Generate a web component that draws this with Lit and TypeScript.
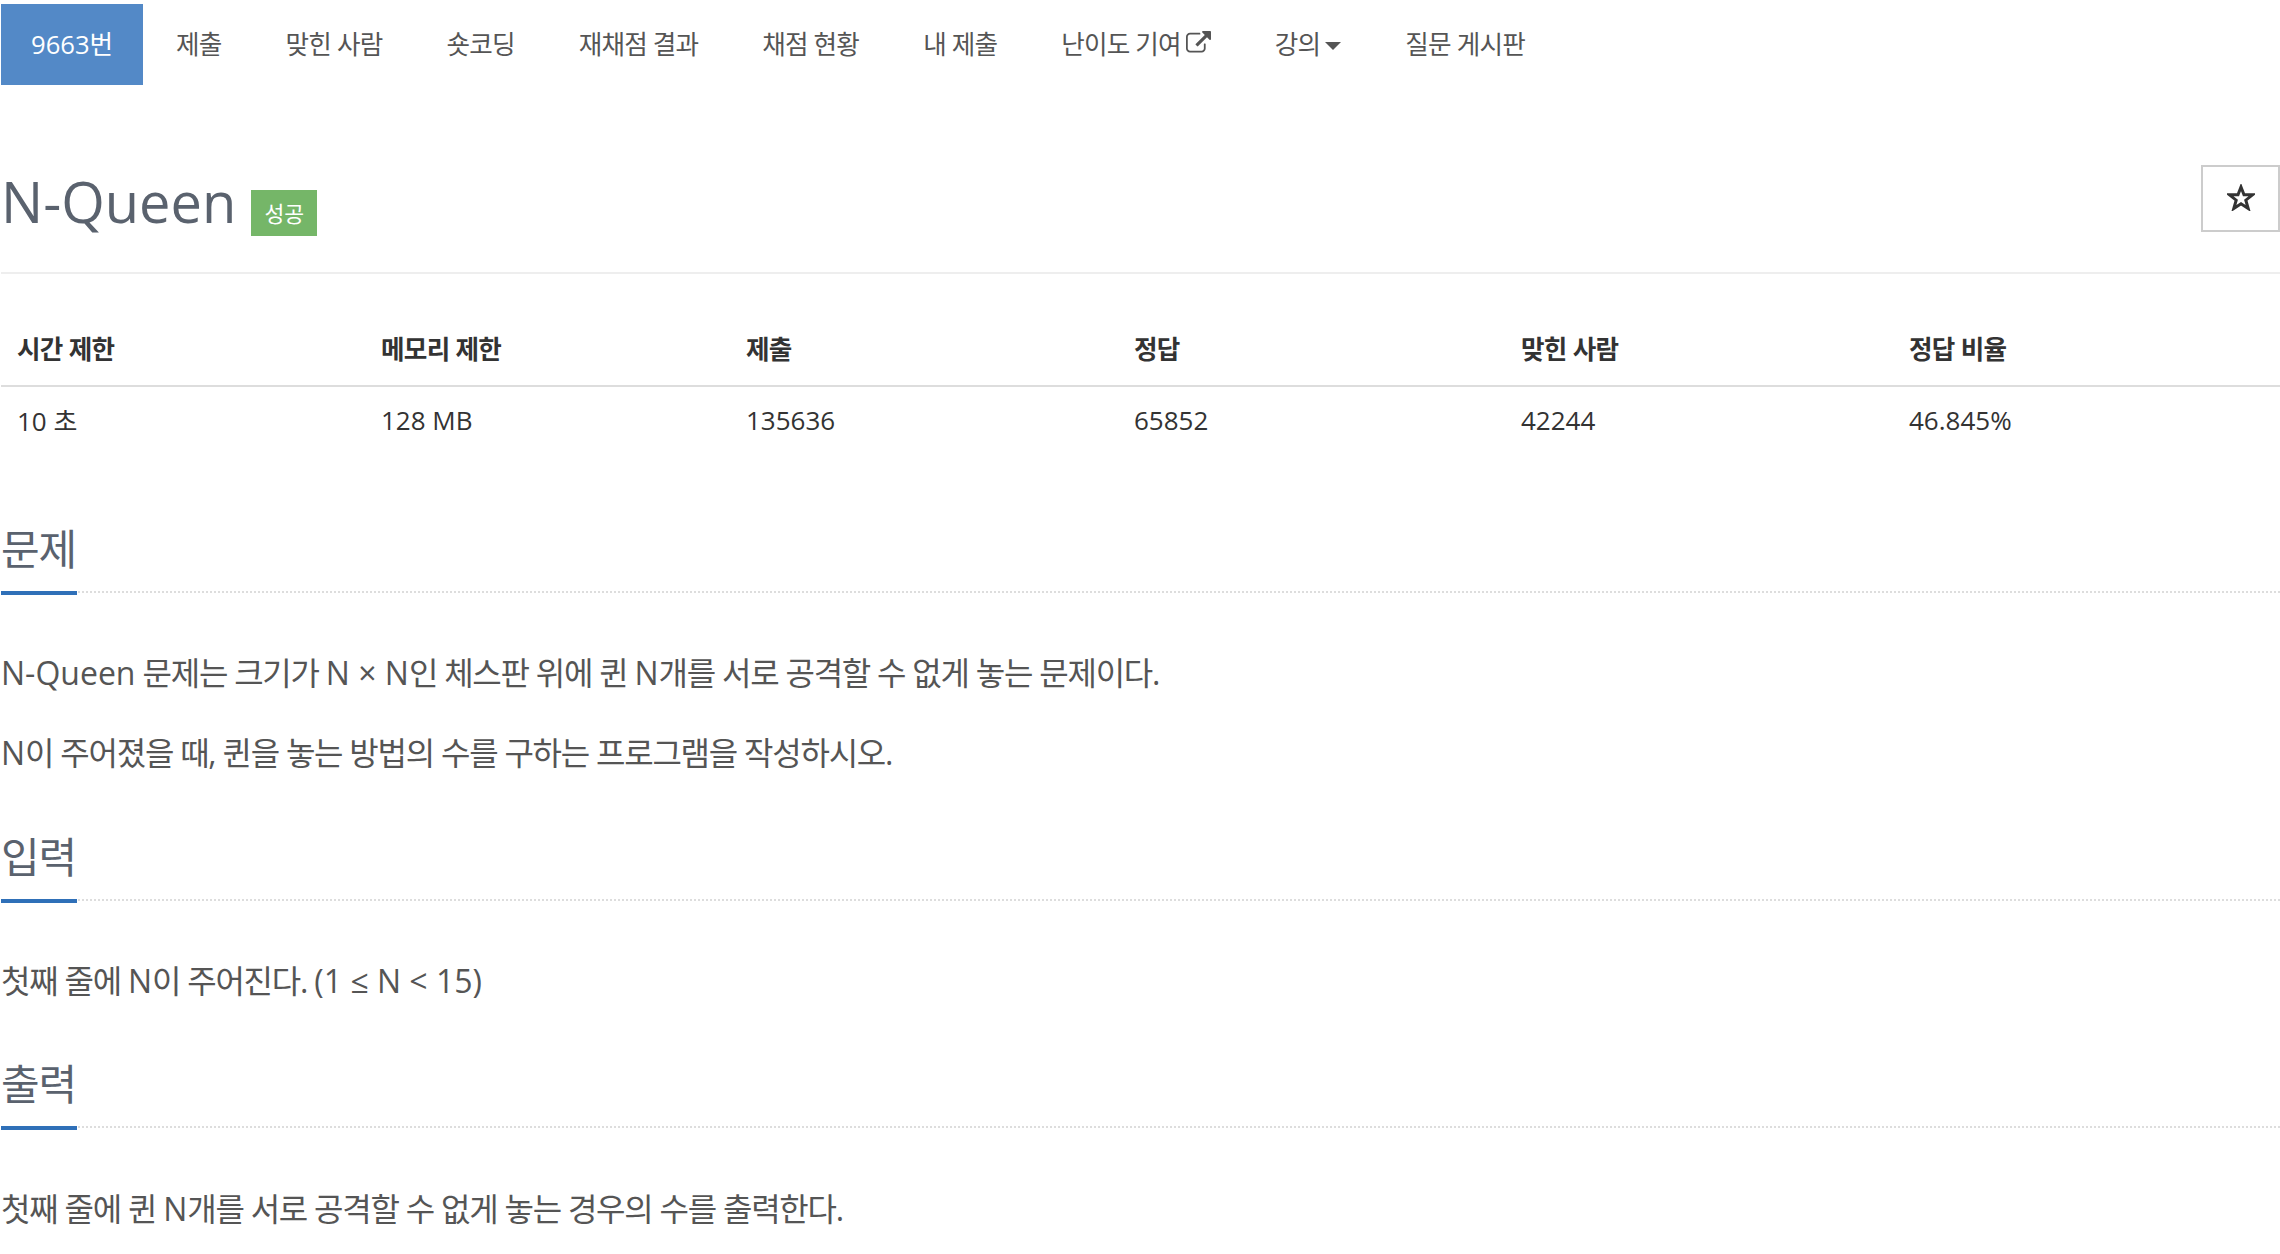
import { LitElement, css, html } from 'lit';
import { customElement } from 'lit/decorators.js';

const NAV = ['제출', '맞힌 사람', '숏코딩', '재채점 결과', '채점 현황', '내 제출'];
const COLS = [
  ['시간 제한', '10 초'],
  ['메모리 제한', '128 MB'],
  ['제출', '135636'],
  ['정답', '65852'],
  ['맞힌 사람', '42244'],
  ['정답 비율', '46.845%'],
];

@customElement('app-root')
export class AppRoot extends LitElement {
  render() {
    return html`
      <nav class="nav">
        <a class="active">9663번</a>
        ${NAV.map((n) => html`<a>${n}</a>`)}
        <a>난이도 기여
          <svg class="ext" viewBox="0 0 1792 1792"><path d="M1408 928v320q0 119-84.5 203.5t-203.5 84.5h-832q-119 0-203.5-84.5t-84.5-203.5v-832q0-119 84.5-203.5t203.5-84.5h704q14 0 23 9t9 23v64q0 14-9 23t-23 9h-704q-66 0-113 47t-47 113v832q0 66 47 113t113 47h832q66 0 113-47t47-113v-320q0-14 9-23t23-9h64q14 0 23 9t9 23zm384-864v512q0 26-19 45t-45 19-45-19l-176-176-652 652q-10 10-23 10t-23-10l-114-114q-10-10-10-23t10-23l652-652-176-176q-19-19-19-45t19-45 45-19h512q26 0 45 19t19 45z"/></svg>
        </a>
        <a>강의<span class="caret"></span></a>
        <a>질문 게시판</a>
      </nav>

      <header class="title-row">
        <h1>N-Queen</h1>
        <span class="badge">성공</span>
        <button class="star">
          <svg viewBox="0 0 28 27"><polygon points="14,3 17,10.8 25.5,10.8 18.8,16.2 21.2,24.5 14,19.8 6.8,24.5 9.2,16.2 2.5,10.8 11,10.8"/></svg>
        </button>
      </header>

      <table>
        <thead><tr>${COLS.map((c) => html`<th>${c[0]}</th>`)}</tr></thead>
        <tbody><tr>${COLS.map((c) => html`<td>${c[1]}</td>`)}</tr></tbody>
      </table>

      <section>
        <h2><span>문제</span></h2>
        <p><b>N-Queen</b> 문제는 크기가 <b>N × N</b>인 체스판 위에 퀸 <b>N</b>개를 서로 공격할 수 없게 놓는 문제이다.</p>
        <p><b>N</b>이 주어졌을 때, 퀸을 놓는 방법의 수를 구하는 프로그램을 작성하시오.</p>
      </section>
      <section>
        <h2><span>입력</span></h2>
        <p>첫째 줄에 <b>N</b>이 주어진다. <b>(1 ≤ N &lt; 15)</b></p>
      </section>
      <section>
        <h2><span>출력</span></h2>
        <p>첫째 줄에 퀸 <b>N</b>개를 서로 공격할 수 없게 놓는 경우의 수를 출력한다.</p>
      </section>
    `;
  }

  static styles = css`
    :host {
      display: block;
      height: 1254px;
      overflow: hidden;
      padding-left: 1px;
      box-sizing: border-box;
      background: #fff;
      color: #555;
      font-family: 'Open Sans', 'Noto Sans CJK KR', sans-serif;
      font-size: 25.6px;
    }

    .nav {
      display: flex;
      margin-top: 4px;
      height: 81px;
    }
    .nav a {
      display: flex;
      align-items: center;
      gap: 5px;
      padding: 0 31px 3px 33px;
      white-space: nowrap;
      letter-spacing: -0.8px;
    }
    .nav a.active {
      background: #5389c7;
      color: #fff;
      padding: 0 30px 3px;
      letter-spacing: 0;
    }
    .ext {
      width: 25px;
      height: 25px;
      fill: #555;
    }
    .caret {
      width: 0;
      height: 0;
      margin-top: 6px;
      border-left: 8px solid transparent;
      border-right: 8px solid transparent;
      border-top: 8px solid #555;
    }

    .title-row {
      display: flex;
      align-items: flex-start;
      height: 107px;
      margin-top: 80px;
      border-bottom: 2px solid #eee;
      position: relative;
    }
    h1 {
      margin: -3px 0 0;
      font-size: 56px;
      font-weight: 400;
      line-height: 78px;
      color: #5a626e;
    }
    .badge {
      margin: 25px 0 0 15px;
      width: 66px;
      height: 46px;
      padding-bottom: 2px;
      box-sizing: border-box;
      background: #75b668;
      color: #fff;
      font-size: 21.6px;
      display: flex;
      align-items: center;
      justify-content: center;
    }
    .star {
      position: absolute;
      right: 0;
      top: 0;
      width: 79px;
      height: 67px;
      padding: 0 0 3px;
      background: #fff;
      border: 2px solid #ccc;
      display: flex;
      align-items: center;
      justify-content: center;
    }
    .star svg {
      width: 28px;
      height: 27px;
      fill: none;
      stroke: #333;
      stroke-width: 3;
    }

    table {
      width: 100%;
      margin-top: 37px;
      border-collapse: collapse;
      table-layout: fixed;
    }
    th, td {
      box-sizing: border-box;
      padding: 0 16px;
      text-align: left;
      color: #333;
    }
    th {
      height: 75px;
      font-weight: 700;
      border-bottom: 2px solid #ddd;
      letter-spacing: -0.7px;
      font-size: 25.6px;
    }
    td {
      height: 70px;
      padding-bottom: 3px;
      font-size: 26px;
    }
    th:nth-child(1) { width: 364px; }
    th:nth-child(2) { width: 365px; }
    th:nth-child(3), th:nth-child(5) { width: 388px; }
    th:nth-child(4) { width: 387px; }

    h2 {
      margin: 0;
      height: 73px;
      font-size: 42px;
      font-weight: 400;
      line-height: 62px;
      color: #5a626e;
      border-bottom: 2px dotted #ddd;
      letter-spacing: -1.2px;
    }
    h2 span {
      display: inline-block;
      height: 73px;
      width: 76px;
      border-bottom: 4px solid #2f70b8;
    }
    p {
      margin: 0;
      font-size: 32px;
      line-height: 40px;
      letter-spacing: -1.25px;
    }
    p b {
      font-weight: 400;
      letter-spacing: 0;
    }
    section:nth-of-type(1) { margin-top: 62px; }
    section:nth-of-type(2) { margin-top: 53px; }
    section:nth-of-type(3) { margin-top: 52px; }
    section p:first-of-type { margin-top: 60px; }
    section:nth-of-type(3) p:first-of-type { margin-top: 61px; }
    section p + p { margin-top: 40px; }
  `;
}

declare global {
  interface HTMLElementTagNameMap {
    'app-root': AppRoot;
  }
}
